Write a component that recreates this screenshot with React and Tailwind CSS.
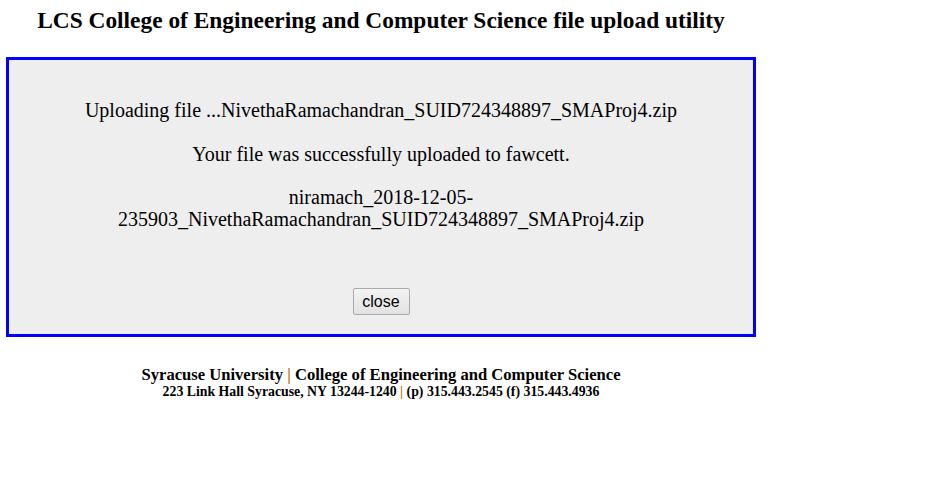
import React from "react";

export default function App() {
  return (
    <div className="w-[934px] h-[484px] bg-white text-black font-['Liberation_Serif',serif]">
      <div className="w-[750px] ml-[6px]">
        <h1 className="pt-[7px] h-[57px] text-center text-[23.4px] leading-[27px] font-bold">
          LCS College of Engineering and Computer Science file upload utility
        </h1>

        <div className="h-[280px] border-[3px] border-[#0000ff] bg-[#eeeeee] flex flex-col items-center">
          <div className="w-[640px] text-center text-[20px] leading-[22px] pt-[39px]">
            <p>Uploading file ...NivethaRamachandran_SUID724348897_SMAProj4.zip</p>
            <p className="mt-[22px]">Your file was successfully uploaded to fawcett.</p>
            <p className="mt-[21px]">
              niramach_2018-12-05-235903_NivethaRamachandran_SUID724348897_SMAProj4.zip
            </p>
          </div>
          <button className="mt-[58px] w-[57px] h-[27px] border border-[#a9a9a9] rounded-[2px] bg-gradient-to-b from-[#f4f4f4] to-[#e2e2e2] text-[16px] font-['Liberation_Sans',sans-serif] text-black leading-none">
            close
          </button>
        </div>

        <div className="mt-[28px] text-center font-bold">
          <div className="text-[16.6px] leading-[19px]">
            Syracuse University <span className="text-[#c66a00]">|</span> College of Engineering and Computer Science
          </div>
          <div className="text-[13.8px] leading-[15px]">
            223 Link Hall Syracuse, NY 13244-1240 <span className="text-[#c66a00]">|</span> (p) 315.443.2545 (f) 315.443.4936
          </div>
        </div>
      </div>
    </div>
  );
}
